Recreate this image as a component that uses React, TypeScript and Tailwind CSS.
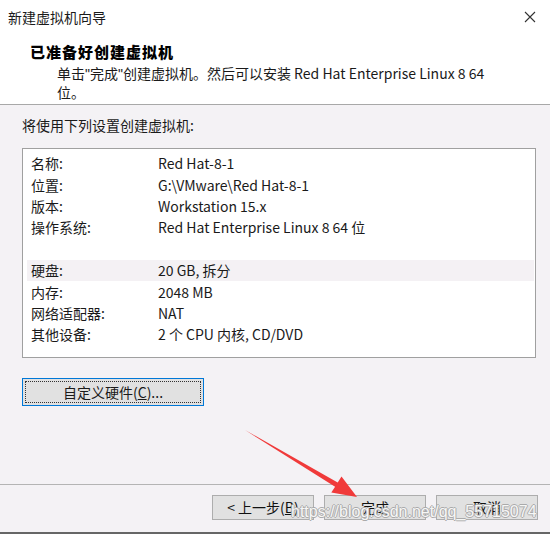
import React from "react"

const rows: { label: string; value: string; hl?: boolean }[] = [
  { label: "名称:", value: "Red Hat-8-1" },
  { label: "位置:", value: "G:\\VMware\\Red Hat-8-1" },
  { label: "版本:", value: "Workstation 15.x" },
  { label: "操作系统:", value: "Red Hat Enterprise Linux 8 64 位" },
  { label: "", value: "" },
  { label: "硬盘:", value: "20 GB, 拆分", hl: true },
  { label: "内存:", value: "2048 MB" },
  { label: "网络适配器:", value: "NAT" },
  { label: "其他设备:", value: "2 个 CPU 内核, CD/DVD" },
]

const FooterButton = ({ children }: { children: React.ReactNode }) => (
  <button className="w-[102px] h-[25px] bg-[#e1e1e1] border border-[#adadad] text-[14px] text-[#111] flex items-center justify-center">
    {children}
  </button>
)

export default function App() {
  return (
    <div className="relative w-[550px] h-[534px] overflow-hidden flex flex-col bg-[#f4f2f5] text-[#1a1a1a] font-['Noto_Sans_CJK_SC',sans-serif]">
      {/* header */}
      <div className="bg-white h-[105px] border-b border-[#a8a8a8] flex flex-col">
        <div className="h-[34px] flex items-center justify-between pl-[8px] pr-[14px] text-[14px]">
          <span>新建虚拟机向导</span>
          <svg width="12" height="12" viewBox="0 0 12 12" className="text-[#333]">
            <path d="M1 1 L11 11 M11 1 L1 11" stroke="currentColor" strokeWidth="1.1" />
          </svg>
        </div>
        <div className="pl-[30px] pt-[8px] text-[15px] font-black text-black leading-[20px] tracking-[1px]">已准备好创建虚拟机</div>
        <div className="pl-[57px] text-[14px] leading-[18px] mt-[2px]">
          单击<span className="font-['Liberation_Sans']">"</span>完成<span className="font-['Liberation_Sans']">"</span>创建虚拟机。然后可以安装 Red Hat Enterprise Linux 8 64
          <br />
          位。
        </div>
      </div>

      {/* body */}
      <div className="flex-1 flex flex-col pl-[22px] pr-[14px]">
        <div className="pt-[10px] text-[14px] leading-[20px]">将使用下列设置创建虚拟机:</div>
        <div className="mt-[13px] h-[210px] bg-white border border-[#a0a0a0] pt-[4px] pl-[4px] pr-[1px]">
          {rows.map((r, i) => (
            <div
              key={i}
              className={`h-[21.4px] flex items-center text-[14px] pl-[4px] ${r.hl ? "bg-[#f4f1f4]" : ""}`}
            >
              <span className="w-[127px]">{r.label}</span>
              <span>{r.value}</span>
            </div>
          ))}
        </div>
        <div className="mt-[20px]">
          <button className="w-[182px] h-[28px] bg-[#e1e1e1] border border-[#0078d7] p-[2px]">
            <div className="w-full h-full border border-dotted border-[#333] flex items-center justify-center text-[14px]">
              自定义硬件(<span className="underline">C</span>)...
            </div>
          </button>
        </div>
      </div>

      {/* footer */}
      <div className="h-[48px] border-t border-[#b4b4b4] flex justify-end gap-[10px] pr-[12px] pt-[10px]">
        <FooterButton>
          &lt; 上一步(<span className="underline">B</span>)
        </FooterButton>
        <FooterButton>完成</FooterButton>
        <FooterButton>取消</FooterButton>
      </div>
      <div className="h-[2px] bg-[#666]" />

      {/* annotation arrow */}
      <svg className="absolute inset-0 pointer-events-none" width="550" height="534">
        <polygon
          points="245,430 337.7,482.6 341.5,476.5 357,497 331.3,492.6 335.1,486.8"
          fill="#f03a3a"
        />
      </svg>

      {/* watermark */}
      <div className="absolute left-[291px] top-[500px] text-[16px] text-white/90 font-['Liberation_Sans',sans-serif] [text-shadow:1px_0_0_#aaa,-1px_0_0_#aaa,0_1px_0_#aaa,0_-1px_0_#aaa] pointer-events-none">
        https://blog.csdn.net/qq_55715074
      </div>
    </div>
  )
}
